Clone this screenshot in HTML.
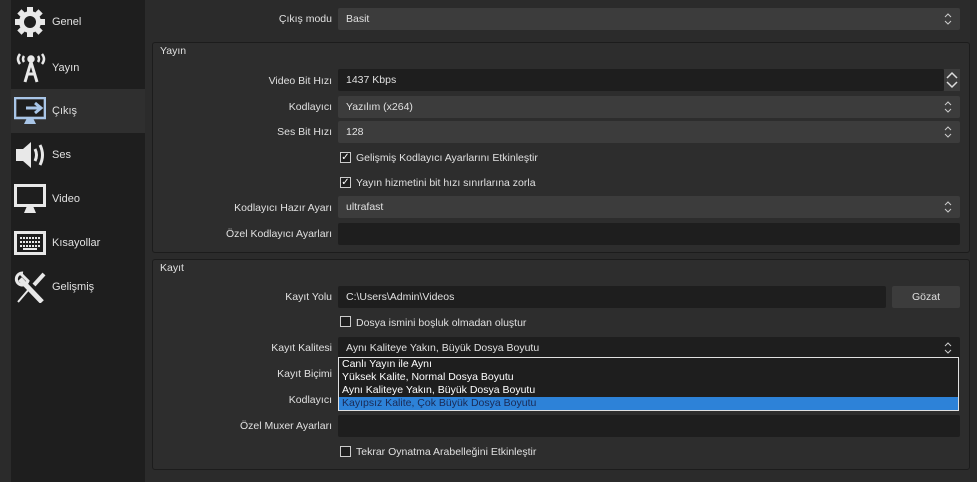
<!DOCTYPE html><html><head><style>
body{margin:0;width:977px;height:482px;background:#2b2b2b;font-family:"Liberation Sans",sans-serif;font-size:10.5px;color:#e0e0e0;position:relative;overflow:hidden}
.a{position:absolute}
.side{left:11px;top:0;width:134px;height:482px;background:#1e1e1e}
.it{position:absolute;left:11px;width:134px;height:44px}
.it span{position:absolute;left:41px;top:16px;font-size:11px}
.sel{background:#2f2f2f}
.grp{border:1px solid #1c1c1c;border-radius:3px;background:#2d2d2d}
.lbl{position:absolute;right:645px;text-align:right;white-space:nowrap}
.combo{position:absolute;left:338px;width:622px;height:22px;background:#3c3c3c;border-radius:2px}
.combo span,.inp span{position:absolute;left:8px;top:5px}
.ch{position:absolute;right:8px;top:5px}
.inp{position:absolute;left:338px;width:622px;height:22px;background:#1e1e1e;border-radius:2px}
.cb{position:absolute;left:340px;width:9px;height:9px;border:1px solid #ccc;background:#1e1e1e;font-size:10px;line-height:9px;text-align:center;color:#fff}
.ct{position:absolute;left:356px}
</style></head><body>
<svg width="0" height="0" style="position:absolute"><defs><symbol id="ud" viewBox="0 0 8 12"><path d="M1 4L4 1L7 4M1 8L4 11L7 8" fill="none" stroke="#ccc" stroke-width="1"/></symbol></defs></svg>
<div class="a side"></div>
<div class="it sel" style="top:89px"></div>
<div class="it" style="top:0"><svg class="a" style="left:3px;top:6px" width="32" height="32" viewBox="0 0 32 32"><g fill="#e8e8e8"><circle cx="16" cy="16" r="11"/><rect x="13" y="1" width="6" height="30"/><rect x="1" y="13" width="30" height="6"/><rect x="13" y="1" width="6" height="30" transform="rotate(45 16 16)"/><rect x="13" y="1" width="6" height="30" transform="rotate(-45 16 16)"/></g><circle cx="16" cy="16" r="6" fill="#1e1e1e"/></svg><span>Genel</span></div>
<div class="it" style="top:46px"><svg class="a" style="left:3px;top:4px" width="34" height="34" viewBox="0 0 34 34" fill="none" stroke="#e8e8e8" stroke-width="2.5"><path d="M6 4Q2 9 6 14M10 6Q8 9 10 12M28 4Q32 9 28 14M24 6Q26 9 24 12"/><circle cx="17" cy="9" r="2.5" fill="#e8e8e8"/><path d="M17 12L11 32M17 12L23 32M13 24H21" stroke-width="3"/></svg><span>Yayın</span></div>
<div class="it" style="top:89px"><svg class="a" style="left:3px;top:8px" width="32" height="28" viewBox="0 0 32 28"><rect x="1" y="1" width="30" height="20" fill="none" stroke="#a9c6e8" stroke-width="2.5"/><rect x="3" y="3" width="26" height="16" fill="#1e1e1e"/><path d="M12 11H26M21 6L27 11L21 16" stroke="#a9c6e8" stroke-width="3" fill="none"/><path d="M10 27L13 21H19L22 27Z" fill="#a9c6e8"/></svg><span>Çıkış</span></div>
<div class="it" style="top:133px"><svg class="a" style="left:3px;top:8px" width="34" height="28" viewBox="0 0 34 28"><path d="M2 8H9L17 1V27L9 20H2Z" fill="#e8e8e8"/><path d="M21 8Q24 14 21 20M26 4Q31 14 26 24" stroke="#e8e8e8" stroke-width="3" fill="none"/></svg><span>Ses</span></div>
<div class="it" style="top:177px"><svg class="a" style="left:3px;top:7px" width="32" height="30" viewBox="0 0 32 30"><rect x="1.5" y="1.5" width="29" height="20" fill="none" stroke="#e8e8e8" stroke-width="3"/><path d="M10 29L13 22H19L22 29Z" fill="#e8e8e8"/></svg><span>Video</span></div>
<div class="it" style="top:221px"><svg class="a" style="left:3px;top:10px" width="32" height="24" viewBox="0 0 32 24"><rect x="1.5" y="1.5" width="29" height="21" fill="none" stroke="#e8e8e8" stroke-width="3"/><path d="M6 7H26M6 11H26M6 15H26" stroke="#e8e8e8" stroke-width="2" stroke-dasharray="2 1"/><rect x="9" y="17" width="14" height="2" fill="#e8e8e8"/></svg><span>Kısayollar</span></div>
<div class="it" style="top:265px"><svg class="a" style="left:3px;top:6px" width="32" height="32" viewBox="0 0 32 32"><path d="M4 31L16 17" stroke="#e8e8e8" stroke-width="2"/><path d="M28 31L6 8" stroke="#e8e8e8" stroke-width="5"/><path d="M9 2A6 6 0 1 0 14 10L7 3" fill="none" stroke="#e8e8e8" stroke-width="3"/><path d="M20 14L30 3" stroke="#e8e8e8" stroke-width="4"/></svg><span>Gelişmiş</span></div>

<div class="lbl" style="top:13px">Çıkış modu</div>
<div class="combo" style="top:8px"><span>Basit</span><svg class="ch" width="8" height="12"><use href="#ud"/></svg></div>

<div class="a grp" style="left:152px;top:42px;width:816px;height:209px"></div>
<div class="a" style="left:160px;top:45px">Yayın</div>
<div class="lbl" style="top:75px">Video Bit Hızı</div>
<div class="inp" style="top:69px;width:606px"><span>1437 Kbps</span></div>
<div class="a" style="left:944px;top:69px;width:16px;height:22px;background:#3c3c3c"><svg class="a" style="left:2px;top:2px" width="12" height="18" viewBox="0 0 12 18"><path d="M1 7L6 2L11 7M1 11L6 16L11 11" fill="none" stroke="#ddd" stroke-width="1.5"/></svg></div>
<div class="lbl" style="top:101px">Kodlayıcı</div>
<div class="combo" style="top:96px"><span>Yazılım (x264)</span><svg class="ch" width="8" height="12"><use href="#ud"/></svg></div>
<div class="lbl" style="top:126px">Ses Bit Hızı</div>
<div class="combo" style="top:121px"><span>128</span><svg class="ch" width="8" height="12"><use href="#ud"/></svg></div>
<div class="cb" style="top:152px">✓</div><div class="ct" style="top:152px">Gelişmiş Kodlayıcı Ayarlarını Etkinleştir</div>
<div class="cb" style="top:177px">✓</div><div class="ct" style="top:177px">Yayın hizmetini bit hızı sınırlarına zorla</div>
<div class="lbl" style="top:202px">Kodlayıcı Hazır Ayarı</div>
<div class="combo" style="top:196px"><span>ultrafast</span><svg class="ch" width="8" height="12"><use href="#ud"/></svg></div>
<div class="lbl" style="top:228px">Özel Kodlayıcı Ayarları</div>
<div class="inp" style="top:223px"></div>

<div class="a grp" style="left:152px;top:259px;width:816px;height:209px"></div>
<div class="a" style="left:160px;top:262px">Kayıt</div>
<div class="lbl" style="top:291px">Kayıt Yolu</div>
<div class="inp" style="top:286px;width:548px"><span>C:\Users\Admin\Videos</span></div>
<div class="a" style="left:892px;top:286px;width:68px;height:22px;background:#3c3c3c;border-radius:2px;text-align:center;line-height:22px">Gözat</div>
<div class="cb" style="top:316px"></div><div class="ct" style="top:317px">Dosya ismini boşluk olmadan oluştur</div>
<div class="lbl" style="top:342px">Kayıt Kalitesi</div>
<div class="inp" style="top:337px"><span>Aynı Kaliteye Yakın, Büyük Dosya Boyutu</span><svg class="ch" width="8" height="12"><use href="#ud"/></svg></div>
<div class="lbl" style="top:368px">Kayıt Biçimi</div>
<div class="lbl" style="top:394px">Kodlayıcı</div>
<div class="a" style="left:338px;top:357px;width:619px;height:52px;background:#1e1e1e;border:1px solid #e0e0e0;line-height:13px;color:#fff">
<div style="padding-left:3px">Canlı Yayın ile Aynı</div><div style="padding-left:3px">Yüksek Kalite, Normal Dosya Boyutu</div><div style="padding-left:3px">Aynı Kaliteye Yakın, Büyük Dosya Boyutu</div><div style="padding-left:3px;background:#2d82d8;color:#1a2a55">Kayıpsız Kalite, Çok Büyük Dosya Boyutu</div></div>
<div class="lbl" style="top:420px">Özel Muxer Ayarları</div>
<div class="inp" style="top:415px"></div>
<div class="cb" style="top:446px"></div><div class="ct" style="top:446px">Tekrar Oynatma Arabelleğini Etkinleştir</div>
</body></html>
